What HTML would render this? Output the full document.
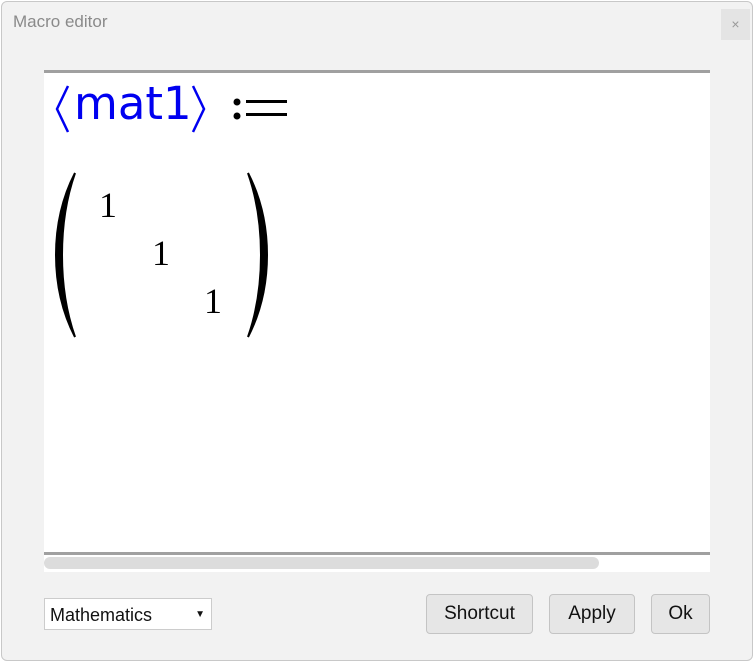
<!DOCTYPE html>
<html><head><style>
body{margin:0;width:754px;height:662px;background:#fff;position:relative;overflow:hidden;font-family:"Liberation Sans",sans-serif}
.win{position:absolute;left:1px;top:1px;width:750px;height:658px;background:#f2f2f2;border:1px solid #c8c8c8;border-radius:6px}
.title{position:absolute;left:13px;top:12px;font-size:17px;color:#8a8a8a}
.close{position:absolute;left:721px;top:9px;width:29px;height:31px;background:#e4e4e4;color:#999;font-size:14px;text-align:center;line-height:31px}
.ed{position:absolute;left:44px;top:70px;width:666px;height:499px;background:#fff;border-top:3px solid #a0a0a0}
.bl{position:absolute;left:44px;top:552px;width:666px;height:3px;background:#a0a0a0}
.sb{position:absolute;left:44px;top:557px;width:555px;height:12px;background:#dcdcdc;border-radius:6px}
.m{position:absolute;font-family:"Liberation Serif",serif;color:#000}
.btn{position:absolute;top:594px;height:38px;background:#e6e6e6;border:1px solid #c4c4c4;border-radius:4px;font-size:19px;text-align:center;line-height:38px;color:#111}
.dd{position:absolute;left:44px;top:598px;width:168px;height:32px;background:#fff;border:1px solid #ccc;font-size:18px;line-height:32px;padding-left:5px;box-sizing:border-box;color:#111}
</style></head><body>
<div class="win"></div>
<div class="title">Macro editor</div>
<div class="close">×</div>
<div class="ed"></div>
<svg style="position:absolute;left:50px;top:80px" width="250" height="60">
<path d="M18 6 L7 29 L18 52" stroke="#0000f0" stroke-width="2.5" fill="none"/>
<path d="M143 6 L154 29 L143 52" stroke="#0000f0" stroke-width="2.5" fill="none"/>
<circle cx="187" cy="22" r="3.5" fill="#000"/><circle cx="187" cy="36" r="3.5" fill="#000"/>
<rect x="196" y="20" width="41" height="3" fill="#000"/><rect x="196" y="33" width="41" height="3" fill="#000"/>
</svg>
<div class="m" style="left:74px;top:77px;font-size:45px;color:#0000f0;font-family:'DejaVu Sans',sans-serif">mat1</div>
<svg style="position:absolute;left:50px;top:170px" width="230" height="172">
<path d="M25 3 Q6 40 6 85 Q6 130 25 167 Q12 130 12 85 Q12 40 25 3Z" stroke="#000" stroke-width="2" fill="#000"/>
<path d="M198 3 Q217 40 217 85 Q217 130 198 167 Q211 130 211 85 Q211 40 198 3Z" stroke="#000" stroke-width="2" fill="#000"/>
</svg>
<div class="m" style="left:99px;top:184px;font-size:36px">1</div>
<div class="m" style="left:152px;top:232px;font-size:36px">1</div>
<div class="m" style="left:204px;top:280px;font-size:36px">1</div>
<div class="bl"></div>
<div class="sb"></div>
<div class="dd">Mathematics<span style="position:absolute;right:6px;top:0;font-size:10px">▼</span></div>
<div class="btn" style="left:426px;width:105px">Shortcut</div>
<div class="btn" style="left:549px;width:84px">Apply</div>
<div class="btn" style="left:651px;width:57px">Ok</div>
</body></html>
